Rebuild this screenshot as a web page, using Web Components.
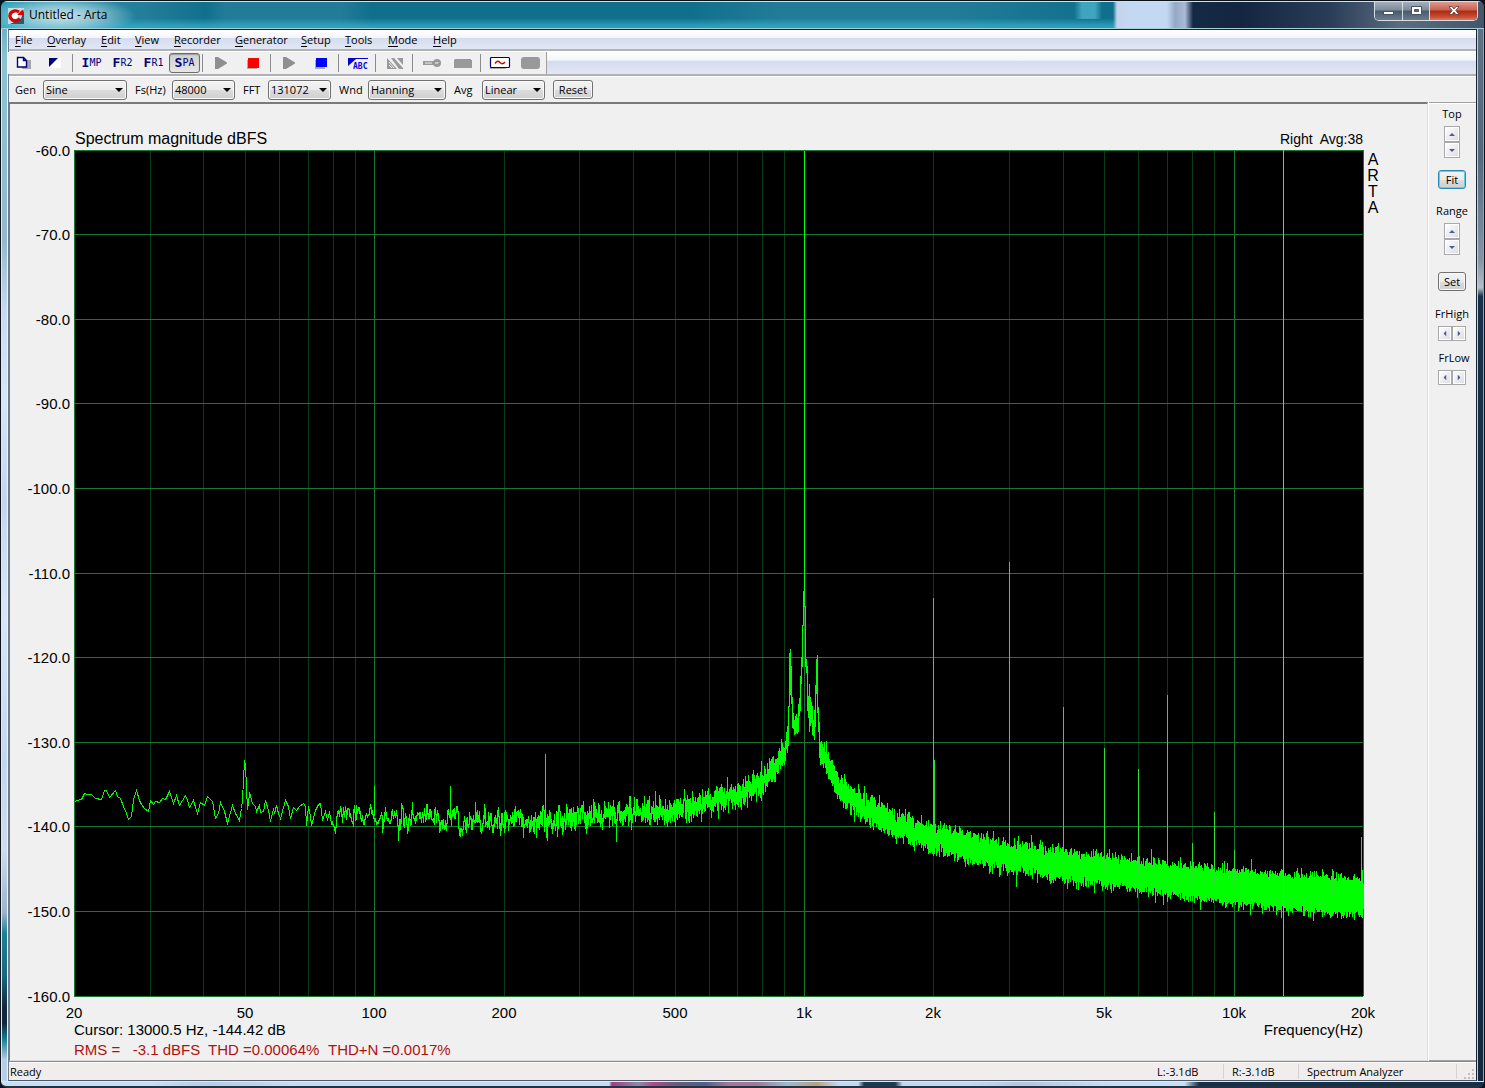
<!DOCTYPE html>
<html lang="en">
<head>
<meta charset="utf-8">
<title>Untitled - Arta</title>
<style>
html, body { margin: 0; height: 100%; }
body { background: #0a1420; font: 11px/14px "Open Sans", "Noto Sans", sans-serif; color: #000; overflow: hidden; }
</style>
</head>
<body>
<arta-window>
  <arta-titlebar slot="title">Untitled - Arta</arta-titlebar>
  <arta-menubar></arta-menubar>
  <arta-toolbar></arta-toolbar>
  <arta-settings>
    <arta-field label="Gen" value="Sine" style="--label:28px;--box:84px"></arta-field>
    <arta-field label="Fs(Hz)" value="48000" style="--label:37px;--box:63px"></arta-field>
    <arta-field label="FFT" value="131072" style="--label:25px;--box:63px"></arta-field>
    <arta-field label="Wnd" value="Hanning" style="--label:29px;--box:78px"></arta-field>
    <arta-field label="Avg" value="Linear" style="--label:28px;--box:63px"></arta-field>
    <arta-button style="--w:40px">Reset</arta-button>
  </arta-settings>
  <arta-workspace>
    <arta-spectrum></arta-spectrum>
    <arta-scale slot="side"></arta-scale>
  </arta-workspace>
  <arta-status></arta-status>
</arta-window>

<script>
function define(name, html, setup) {
  const template = document.createElement('template');
  template.innerHTML = html;
  customElements.define(name, class extends HTMLElement {
    connectedCallback() {
      if (this.shadowRoot) return;
      this.attachShadow({ mode: 'open' }).append(template.content.cloneNode(true));
      if (setup) setup(this, this.shadowRoot);
    }
  });
}

define('arta-window', `
<style>
:host { display: grid; height: 100vh; box-sizing: border-box; grid: 28px minmax(0, 1fr) 7px / 7px minmax(0, 1fr) 7px; background: #0a1420; border: 1px solid #0b1118; border-width: 1px 1px 0 1px; border-radius: 7px 7px 6px 6px; overflow: hidden; }
.top { grid-column: 1 / 4; min-width: 0; }
.edge { box-sizing: border-box; }
.left { border-left: 1px solid #d6eaf4; border-right: 1px solid #eef4fb;
  background: linear-gradient(#6fb3c6, #8cc3d3 3%, #93b9cc 20%, #c9daf0 27%, #d7e5f8 35%, #c4d5ec 45%, #d9e6f8 55%, #c4d6ee 70%, #cfdcec 78%, #9cb4cc 84%, #1b7f95 86%, #17697e 90%, #14263c 93%, #14263c 94.5%, #157e92 96%, #b8cde6 98%); }
.client { display: flex; flex-direction: column; min-width: 0; background: #f0f0f0; box-sizing: border-box; border: 1px solid #17232f; border-color: #17232f #17232f #4b5a69 #6d7d8d; }
.right { border-left: 1px solid #c3ced8; border-right: 1px solid #8fa4b5;
  background: linear-gradient(#5f7185, #53677e 12%, #8595a5 22%, #b4bfca 24.6%, #17304a 25.4%, #17304a 70%, #14283f); }
.bottom { grid-column: 1 / 4; box-sizing: border-box; border-top: 1px solid #dcebf8; border-bottom: 2px solid #26313d; border-radius: 0 0 6px 6px;
  background: linear-gradient(90deg, #c6def6 0 10%, #b4cde8 14%, #c4dcf4 20% 41%, #a43a82 41.2%, #8a8aa8 43%, #b0488a 44%, #6a5a7a 45.5%, #50608a 47.5%, #a07898 49%, #a07898 51%, #9dbad2 53%, #b7a07c 55%, #c0daf4 56.5% 57.8%, #1c3a52 58.2% 60.3%, #c0daf4 60.8% 65%, #b3c6e2 69%, #c6dff8 75% 79.8%, #17304a 80.8% 100%); }
</style>
<div class="top"><slot name="title"></slot></div>
<div class="edge left"></div>
<div class="client"><slot></slot></div>
<div class="edge right"></div>
<div class="bottom"></div>`);

define('arta-titlebar', `
<style>
:host { display: flex; height: 28px; box-sizing: border-box; align-items: flex-start; border-top: 1px solid #cfe3ea; border-bottom: 1px solid #a8cdd8;
  background:
   radial-gradient(ellipse 75px 20px at 60px 14px, #d6ecf2ee, #b5d9e3aa 50%, #ffffff00),
   linear-gradient(90deg, #3fa4bd00 1073px, #3fa4bd 1081px 1094px, #3fa4bd00 1101px) 0 0 / 100% 17px no-repeat,
   linear-gradient(90deg, #ffffff00 1112px, #c3d4ea 1116px, #c3d9f2 1130px 1166px, #94a9c4 1174px, #a9bbd5 1184px, #142a44 1192px, #14263f 1240px, #2a3e58 1330px, #5b6c80 1400px, #44566b 1484px),
   linear-gradient(#35b4cf00 62%, #35b4cfaa 92%),
   linear-gradient(90deg, #2aa0b8, #227c98 150px, #10708c 205px, #227c98 225px, #227c98 340px, #10708c 370px 690px, #227c98 780px, #227c98 950px, #10708c 1090px); }
svg { display: block; }
.icon { margin: 6px 5px 0 7px; }
.name { flex: 1; font-size: 12px; line-height: 26px; }
.controls { display: flex; height: 19px; margin-right: 6px; box-sizing: border-box; border: 1px solid #d5dde4; border-top: 0; border-radius: 0 0 5px 5px; overflow: hidden; }
button { padding: 0; border: 0; border-right: 1px solid #d5dde4; width: 28px; display: grid; place-items: center; background: linear-gradient(#a4afbb, #7c8a9a 45%, #4a5a6d 50%, #6c7b8c); }
button:nth-child(2) { width: 27px; }
button:last-child { width: 47px; border-right: 0; background: linear-gradient(#dd9a8e, #c9604d 45%, #a82a12 50%, #c8482e 80%, #d8795c); }
</style>
<svg class="icon" width="16" height="16" viewBox="0 0 16 16"><rect width="16" height="16" fill="#c6dfe2"/><path d="M16 1v15H2l11-5z" fill="#30586a"/><path d="M12 10.500A5.500 5 0 1 1 11 4" fill="none" stroke="#d80000" stroke-width="3.200"/><path d="M9 7h7l-1.500-5.500z" fill="#d80000"/><circle cx="7" cy="8" r="2.800" fill="#fff"/></svg>
<span class="name"><slot></slot></span>
<div class="controls">
<button aria-label="Minimize"><svg width="13" height="12"><rect x="1.500" y="6.500" width="10" height="3" fill="#fff" stroke="#455366"/></svg></button>
<button aria-label="Maximize"><svg width="13" height="12"><path d="M1.500 1.500h10v8h-10zM4.500 4.500h4v2h-4z" fill="#fff" fill-rule="evenodd" stroke="#455366"/></svg></button>
<button aria-label="Close"><svg width="14" height="12"><path d="M2 1.500h3l2 2.500 2-2.500h3L8.800 5.500 12 9.500H9L7 7 5 9.500H2l3.200-4z" fill="#fff" stroke="#5d3b3b" stroke-width=".8"/></svg></button>
</div>`);

define('arta-menubar', `
<style>
:host { display: block; flex: none; }
nav { display: flex; height: 21px; box-sizing: border-box; border-top: 1px solid #fff; border-bottom: 2px solid #b4b4b8; background: linear-gradient(#fff, #f3f5fb 38%, #d5dcee 40%, #e2e7f5); }
button { font: inherit; color: inherit; line-height: 18px; padding: 0 7px; border: 0; background: none; width: var(--w); text-align: left; white-space: nowrap; }
button:first-child { margin-left: -1px; }
u { text-underline-offset: 2px; }
</style>
<nav></nav>`, (el, root) => {
  const items = [['File', 32], ['Overlay', 54], ['Edit', 34], ['View', 39], ['Recorder', 61], ['Generator', 66], ['Setup', 44], ['Tools', 43], ['Mode', 45], ['Help', 39]];
  root.querySelector('nav').innerHTML = items.map(([t, w]) => `<button style="--w:${w}px"><u>${t[0]}</u>${t.slice(1)}</button>`).join('');
});

const play = '<path d="M2 1h3l9 5.500v1L5 13H2z" fill="#8f8f8f"/>';
define('arta-toolbar', `
<style>
:host { display: flex; flex: none; height: 25px; box-sizing: border-box; border-top: 1px solid #fff; border-bottom: 2px solid #b0b0b4; background: linear-gradient(#fff, #f3f5fb 38%, #d5dcee 40%, #e2e7f5); }
.bar { display: flex; align-items: center; margin-left: -1px; background: #f0f0f0; border-right: 1px solid #a0a0a0; }
button { width: 31px; height: 20px; padding: 0; border: 1px solid transparent; border-radius: 3px; background: none; display: flex; align-items: center; justify-content: center; font: 10px/16px "DejaVu Sans Mono", monospace; color: #00007b; }
button b { font-size: 13px; }
button.on { border-color: #6d6d6d; background: linear-gradient(#d0d0d0, #e6e6e6); box-shadow: inset 0 1px 1px #999; }
i { width: 1px; height: 18px; margin: 0 3px 0 2px; background: #8c8c8c; }
</style>
<div class="bar">
<button aria-label="New"><svg width="16" height="14"><path d="M6 4h9v9H6z" fill="#a5a5b0"/><path d="M1.500 1.500h6l3 3v6.500h-9zM7.500 1.500v3h3" fill="#fff" stroke="#00007b" stroke-width="1.400"/></svg></button>
<button aria-label="Overlay"><svg width="14" height="12"><path d="M1 1h12v10H1z" fill="#fff"/><path d="M1 1h9L1 10z" fill="#00007b"/></svg></button>
<i></i>
<button><b>I</b>MP</button><button><b>F</b>R2</button><button><b>F</b>R1</button><button class="on"><b>S</b>PA</button>
<i></i>
<button aria-label="Play"><svg width="18" height="14">${play}</svg></button>
<button aria-label="Record stop"><svg width="14" height="14"><path d="M1 4h10v9H1z" fill="#aaa"/><path d="M2 2h11v10H2z" fill="#f00"/></svg></button>
<i></i>
<button aria-label="Generate"><svg width="18" height="14">${play}</svg></button>
<button aria-label="Stop"><svg width="14" height="14"><path d="M1 4h10v9H1z" fill="#aaa"/><path d="M2 2h11v9H2z" fill="#00f"/></svg></button>
<i></i>
<button aria-label="Set title"><svg width="22" height="13"><path d="M1 1h20v1H9L1 9z" fill="#0000d8"/><text x="6" y="12" font-family="DejaVu Sans Mono, monospace" font-weight="bold" font-size="8" fill="#0000d8">ABC</text></svg></button>
<i></i>
<button aria-label="Overlay off"><svg width="18" height="13"><path d="M1 1l10 11H1zM5 1h3l9 10v1h-4zM11 1h6v7z" fill="#999"/><path d="M3 5l5 6M3 8l3 3" stroke="#f0f0f0"/></svg></button>
<i></i>
<button aria-label="Calibrate"><svg width="20" height="12"><path d="M1 4h11v4H1z" fill="#999"/><path d="M3 6h7" stroke="#eee"/><circle cx="15" cy="6" r="4" fill="#999"/><path d="M13 6h3v-1" fill="none" stroke="#eee"/></svg></button>
<button aria-label="Record"><svg width="19" height="12"><path d="M2 2h16v1h1v8H1V3z" fill="#999"/></svg></button>
<i></i>
<button aria-label="Signal"><svg width="22" height="14"><path d="M1 4h16v9H1z" fill="#aaa"/><rect x="1.500" y="1.500" width="19" height="10" rx="1" fill="#fff" stroke="#00007b" stroke-width="1.200"/><path d="M6 7.500c2-3 3.500-2.500 5-1s3 2 5-.5" fill="none" stroke="#d00000" stroke-width="1.400"/></svg></button>
<button aria-label="Device"><svg width="20" height="14"><rect x="0" y="1" width="19" height="12" rx="3" fill="#999"/></svg></button>
</div>`);

define('arta-settings', `
<style>
:host { display: flex; flex: none; align-items: center; gap: 8px; height: 26px; box-sizing: border-box; padding: 0 6px; border-top: 1px solid #fff; background: #f0f0f0; }
</style><slot></slot>`);

define('arta-field', `
<style>
:host { display: grid; grid-template-columns: var(--label) var(--box); align-items: center; }
.box { display: grid; align-items: center; }
select, svg { grid-area: 1 / 1; }
select { appearance: none; width: 100%; height: 20px; margin: 0; padding: 1px 16px 0 2px; font: inherit; color: #000; border: 1px solid #707070; border-radius: 3px; background: linear-gradient(#f3f3f3, #ebebeb 50%, #dcdcdc 51%, #cfcfcf); box-shadow: inset 0 0 0 1px #fafafa; }
svg { justify-self: end; margin-right: 4px; pointer-events: none; }
</style>
<label for="s"></label>
<div class="box"><select id="s"></select><svg width="8" height="4"><path d="M0 0h8L4 4z"/></svg></div>`, (el, root) => {
  root.querySelector('label').textContent = el.getAttribute('label');
  root.querySelector('select').add(new Option(el.getAttribute('value')));
});

define('arta-button', `
<style>
:host { display: block; }
button { display: block; width: var(--w); height: 19px; padding: 0; font: inherit; line-height: 17px; color: #000; border: 1px solid #707070; border-radius: 3px; background: linear-gradient(#f3f3f3, #ebebeb 50%, #dddddd 51%, #cfcfcf); box-shadow: inset 0 0 0 1px #fafafa; }
:host([focused]) button { border-color: #2f86b4; box-shadow: inset 0 0 0 1px #5fd0f4; }
</style><button><slot></slot></button>`);

define('arta-spin', `
<style>
:host { display: flex; flex-direction: column; }
:host([horizontal]) { flex-direction: row; }
button { width: 16px; height: 16px; padding: 0; border: 1px solid #a9a9ad; background: linear-gradient(135deg, #fff, #dcdce0); display: grid; place-items: center; box-shadow: inset 0 0 0 1px #fff; }
:host([horizontal]) button { width: 14px; height: 15px; }
svg { display: block; }
:host([horizontal]) svg { transform: rotate(-90deg); }
</style>
<button aria-label="Increase"><svg width="6" height="3"><path d="M0 3h6L3 0z" fill="#4a5a9a"/></svg></button>
<button aria-label="Decrease"><svg width="6" height="3"><path d="M0 0h6L3 3z" fill="#4a5a9a"/></svg></button>`);

define('arta-workspace', `
<style>
:host { display: flex; flex: 1; min-height: 0; }
.main { flex: 1; min-width: 0; box-sizing: border-box; border: 1px solid #6b6b6b; border-width: 2px 1px 1px 1px; border-color: #7a7a7a #dcdcdc #dcdcdc #7a7a7a; background: #f0f0f0; }
.side { width: 46px; padding-right: 1px; border-left: 1px solid #fff; box-shadow: inset 0 1px #a0a0a0, inset 0 2px #fff, inset 0 -1px #a0a0a0; }
</style>
<div class="main"><slot></slot></div><div class="side"><slot name="side"></slot></div>`);

define('arta-scale', `
<style>
:host { display: flex; flex-direction: column; align-items: center; padding-top: 5px; }
.b { margin: 12px 0 15px; } .s { margin-bottom: 17px; } .c { margin-bottom: 16px; }
span { margin-bottom: 5px; } .f { margin-bottom: 10px; } .l { padding-left: 4px; }
</style>
<span>Top</span><arta-spin></arta-spin>
<arta-button class="b" focused style="--w:28px">Fit</arta-button>
<span>Range</span><arta-spin class="s"></arta-spin>
<arta-button class="c" style="--w:28px">Set</arta-button>
<span>FrHigh</span><arta-spin class="f" horizontal></arta-spin>
<span class="l">FrLow</span><arta-spin horizontal></arta-spin>`);

define('arta-status', `
<style>
:host { display: flex; flex: none; height: 19px; box-sizing: border-box; border-top: 1px solid #8a8a8a; background: #f1edec; box-shadow: inset 0 1px #fff; }
span { box-sizing: border-box; padding-left: 8px; border-right: 1px solid #d6d2d1; margin-top: 2px; margin-bottom: 1px; line-height: 16px; white-space: nowrap; }
.ready { flex: 1; padding-left: 1px; border: 0; }
.lvl { width: 75px; } .mode { width: 158px; }
svg { width: 19px; height: 18px; }
</style>
<span class="ready">Ready</span><span class="lvl">L:-3.1dB</span><span class="lvl">R:-3.1dB</span><span class="mode">Spectrum Analyzer</span>
<svg viewBox="0 0 19 18"><path d="M15 7h2v2h-2zM11 11h2v2h-2zM15 11h2v2h-2zM7 15h2v2H7zM11 15h2v2h-2zM15 15h2v2h-2z" fill="#c3bfbe"/></svg>`);

/* Trace levels as [x, y] on a 1289 x 846 plot area; HEAD is relative to y = 613. */
const HEAD = [[0,39],[2,37],[7,36],[10,30],[13,31],[17,31],[21,35],[27,36],[30,27],[32,27],[35,34],[41,27],[43,33],[46,35],[49,43],[52,50],[54,56],[57,53],[59,36],[62,27],[65,37],[67,41],[70,45],[74,48],[76,37],[79,41],[81,38],[85,39],[88,35],[91,36],[95,28],[97,34],[99,40],[102,32],[105,42],[111,32],[113,37],[115,44],[119,37],[123,50],[126,39],[130,42],[133,33],[138,38],[141,55],[144,50],[146,39],[150,48],[153,60],[158,42],[161,50],[165,57],[167,45],[168,36],[170,-3],[171,2],[173,46],[174,40],[175,29],[178,40],[181,43],[182,48],[185,42],[186,49],[189,48],[191,37],[194,47],[196,58],[199,45],[200,50],[202,42],[204,50],[206,55],[211,37],[214,43],[216,55],[219,44],[222,47],[225,43],[229,40],[231,43],[232,62],[234,43],[236,53],[237,62],[241,47],[244,41],[246,40],[248,57],[251,48],[253,57],[255,48],[257,61]];
const MEAN = [[255,662],[300,665],[345,668],[390,669],[460,669],[530,666],[575,661],[625,655],[665,644],[685,634],[701,617],[711,598],[714,588],[715,555],[716,506],[717,530],[719,570],[721,577],[724,573],[726,555],[728,512],[729,475],[730,440],[731,460],[732,510],[734,548],[737,565],[740,577],[741,560],[742,540],[743,507],[744,560],[746,598],[752,608],[757,622],[762,631],[772,644],[786,655],[806,666],[826,676],[858,686],[892,696],[935,706],[990,715],[1031,720],[1093,728],[1160,736],[1225,742],[1289,746]];
const SPIKES = [[100,635],[150,635],[250,603],[350,651],[450,640],[2000,447],[3000,411],[4000,556],[5000,597],[6000,618],[7000,544],[8000,692],[9000,661],[10000,699],[11000,708],[16970,718],[19800,686]];

function lerp(points, x) {
  let i = 1;
  while (i < points.length - 1 && points[i][0] < x) i++;
  const [a, b] = [points[i - 1], points[i]];
  return a[1] + (b[1] - a[1]) * (x - a[0]) / (b[0] - a[0]);
}

function tracePath() {
  let seed = 7;
  const rnd = () => { seed = (seed * 1664525 + 1013904223) >>> 0; return (seed + 1) / 4294967297; };
  const gauss = () => Math.sqrt(-2 * Math.log(rnd())) * Math.cos(2 * Math.PI * rnd());
  let d = 'M' + HEAD.map(([x, y]) => x + ' ' + (y + 613)).join('L');
  const step = 48000 / 131072;
  let column = 257, min = 674, max = 674, last = 674, noise = 0;
  for (let f = 79.7; f < 20020; f += step) {
    const x = 1289 / 3 * Math.log10(f / 20);
    noise = noise * .5 + gauss() * .87;
    const y = lerp(MEAN, x) + noise * 6.5;
    const c = Math.floor(x);
    if (c !== column) {
      const mid = (last + y) / 2;
      min = Math.min(min, mid); max = Math.max(max, mid);
      d += `M${column} ${Math.floor(min)}V${Math.ceil(max)}`;
      column = c;
      min = Math.min(y, mid); max = Math.max(y, mid);
    }
    min = Math.min(min, y); max = Math.max(max, y); last = y;
  }
  return d + `M${column} ${Math.floor(min)}V${Math.ceil(max)}M730 0V450`;
}

define('arta-spectrum', `
<style>
:host { display: block; height: 100%; }
svg { display: block; width: 100%; height: 100%; }
text { font-family: "Liberation Sans", Arial, sans-serif; font-size: 15px; white-space: pre; }
.t { font-size: 16px; } .a { font-size: 14px; }
line, rect, path { shape-rendering: crispEdges; vector-effect: non-scaling-stroke; }
</style>
<svg role="img" aria-label="Spectrum magnitude" preserveAspectRatio="none"></svg>`, (el, root) => {
  const svg = root.querySelector('svg');
  const trace = tracePath();
  const draw = () => {
    const W = Math.max(el.clientWidth, 400), H = Math.max(el.clientHeight, 300);
    const L = 64, T = 46, w = W - L - 64, h = H - T - 64;
    const fx = f => Math.round(L + w * Math.log10(f / 20) / 3);
    let s = `<rect x="${L}" y="${T}" width="${w}" height="${h}" fill="#000"/>`;
    const v = (f, c) => { s += `<line x1="${fx(f) + .5}" x2="${fx(f) + .5}" y1="${T}" y2="${T + h}" stroke="${c}"/>`; };
    for (let d = 10; d < 20000; d *= 10) for (let k = 1; k < 10; k++) {
      const f = d * k;
      if (f > 20 && f < 20000) v(f, k === 1 ? '#187830' : '#0b3c18');
    }
    for (let i = 0; i <= 10; i++) {
      const y = Math.floor(T + h * i / 10) + .5;
      s += `<line x1="${L}" x2="${L + w}" y1="${y}" y2="${y}" stroke="#187830"/>`;
      s += `<text x="${L - 4}" y="${y + 5}" text-anchor="end">${-60 - 10 * i}.0</text>`;
    }
    v(20, '#187830'); v(20000, '#187830');
    s += `<g transform="translate(${L + .5} ${T + .5}) scale(${w / 1289} ${h / 846})" fill="none" stroke="#0f0"><path d="${trace}"/>`;
    for (const [f, y] of SPIKES) {
      const x = Math.round(1289 / 3 * Math.log10(f / 20));
      s += `<path d="M${x} ${y}V${lerp(MEAN, x).toFixed()}"${f > 1000 ? ' stroke="#2ee02e"' : ''}/>`;
      if (f === 2000) s += `<path d="M${x + 1} 609V${y + 240}" stroke="#2ee02e"/>`;
    }
    s += '</g>';
    v(13000.5, '#b5b04a');
    s += [[20,'20'],[50,'50'],[100,'100'],[200,'200'],[500,'500'],[1000,'1k'],[2000,'2k'],[5000,'5k'],[10000,'10k'],[20000,'20k']]
      .map(([f, t]) => `<text x="${fx(f)}" y="${T + h + 22}" text-anchor="middle">${t}</text>`).join('');
    s += `<text class="t" x="${L + 1}" y="${T - 6}">Spectrum magnitude dBFS</text>`;
    s += `<text class="a" x="${L + w}" y="${T - 6}" text-anchor="end">Right  Avg:38</text>`;
    s += [...'ARTA'].map((c, i) => `<text class="t" x="${L + w + 10}" y="${T + 15 + 16 * i}" text-anchor="middle">${c}</text>`).join('');
    s += `<text x="${L}" y="${T + h + 39}">Cursor: 13000.5 Hz, -144.42 dB</text>`;
    s += `<text x="${L + w}" y="${T + h + 39}" text-anchor="end">Frequency(Hz)</text>`;
    s += `<text fill="#b01010" y="${T + h + 59}"><tspan x="${L}">RMS =   -3.1 dBFS</tspan><tspan x="${L + 134}">THD =0.00064%</tspan><tspan x="${L + 254}">THD+N =0.0017%</tspan></text>`;
    svg.setAttribute('viewBox', `0 0 ${W} ${H}`);
    svg.innerHTML = s;
  };
  draw();
  new ResizeObserver(draw).observe(el);
});
</script>
</body>
</html>
